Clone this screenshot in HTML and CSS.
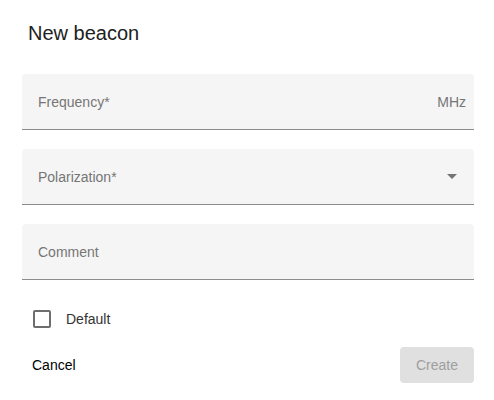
FILE: index.html
```html
<!DOCTYPE html>
<html>
<head>
<meta charset="utf-8">
<link rel="stylesheet" href="styles.css">
</head>
<body>
<div class="dialog">
  <h2 class="title">New beacon</h2>
  <div class="field">
    <span class="label">Frequency*</span>
    <span class="suffix">MHz</span>
  </div>
  <div class="field">
    <span class="label">Polarization*</span>
    <span class="arrow"></span>
  </div>
  <div class="field">
    <span class="label">Comment</span>
  </div>
  <label class="check-row">
    <span class="box"></span>
    <span class="check-label">Default</span>
  </label>
  <div class="actions">
    <button class="btn cancel">Cancel</button>
    <button class="btn create" disabled>Create</button>
  </div>
</div>
</body>
</html>
```

FILE: styles.css
```css
html, body {
  margin: 0;
  padding: 0;
  background: #fff;
  font-family: "Liberation Sans", Arial, sans-serif;
}
.dialog {
  padding: 17px 20px 0 22px;
}
.title {
  margin: 0 0 25px 0;
  padding-left: 6px;
  height: 32px;
  line-height: 32px;
  font-size: 20px;
  font-weight: 400;
  color: #212121;
}
.field {
  box-sizing: border-box;
  height: 56px;
  margin-bottom: 19px;
  background: #f5f5f5;
  border-bottom: 1px solid #8c8c8c;
  border-radius: 4px 4px 0 0;
  display: flex;
  align-items: center;
  padding: 0 8px 0 16px;
  font-size: 14px;
  color: #757575;
}
.label {
  flex: 1;
}
.suffix {
  color: #757575;
}
.arrow {
  width: 0;
  height: 0;
  border-left: 5px solid transparent;
  border-right: 5px solid transparent;
  border-top: 5px solid #757575;
  margin-right: 9px;
}
.check-row {
  display: flex;
  align-items: center;
  height: 40px;
  padding-left: 11px;
}
.box {
  box-sizing: border-box;
  width: 18px;
  height: 18px;
  border: 2px solid #6e6e6e;
  border-radius: 2px;
}
.check-label {
  margin-left: 15px;
  font-size: 14px;
  color: #333;
}
.actions {
  margin-top: 8px;
  display: flex;
  justify-content: space-between;
  align-items: center;
  height: 36px;
}
.btn {
  font-family: "Liberation Sans", Arial, sans-serif;
  font-size: 14px;
  border: none;
  background: transparent;
  height: 36px;
  border-radius: 4px;
  padding: 0 16px;
}
.cancel {
  padding-left: 10px;
  color: #000;
}
.create {
  background: #e0e0e0;
  color: #9e9e9e;
}
```
